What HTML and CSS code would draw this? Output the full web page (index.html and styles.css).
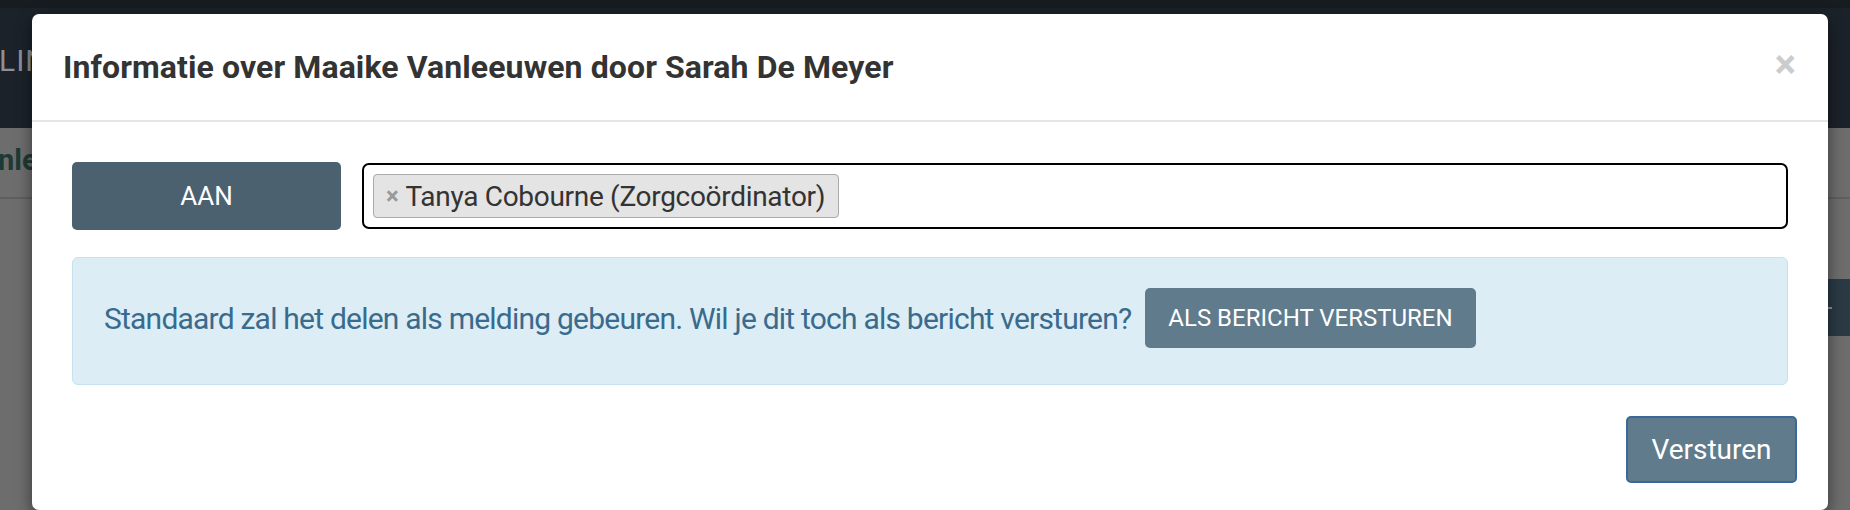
FILE: index.html
```html
<!DOCTYPE html>
<html lang="nl">
<head>
<meta charset="utf-8">
<title>Informatie delen</title>
<link rel="stylesheet" href="styles.css">
</head>
<body>
<div class="page">
  <header class="topbar">
    <div class="topstrip"></div>
    <div class="brandrow"><span class="brand">LINK</span></div>
  </header>
  <div class="subbar"><span class="pagetitle">nleeuwen</span></div>
  <div class="content">
    <div class="sidebtn"><span class="dot"></span></div>
  </div>
</div>

<div class="modal">
  <div class="modal-header">
    <h4 class="modal-title">Informatie over Maaike Vanleeuwen door Sarah De Meyer</h4>
    <span class="close">&#215;</span>
  </div>
  <div class="modal-body">
    <div class="to-row">
      <div class="to-label">AAN</div>
      <div class="to-input">
        <span class="tag"><span class="tag-x">&#215;</span>Tanya Cobourne (Zorgcoördinator)</span>
      </div>
    </div>
    <div class="alert">
      <span class="alert-text">Standaard zal het delen als melding gebeuren. Wil je dit toch als bericht versturen?</span>
      <button class="btn-small">ALS BERICHT VERSTUREN</button>
    </div>
  </div>
  <div class="modal-footer">
    <button class="btn-send">Versturen</button>
  </div>
</div>
</body>
</html>
```

FILE: styles.css
```css
html, body {
  margin: 0;
  padding: 0;
}
body {
  width: 1850px;
  height: 510px;
  overflow: hidden;
  background: #6d6d6d;
  font-family: "Roboto", "Liberation Sans", sans-serif;
}
.page {
  height: 510px;
  display: flex;
  flex-direction: column;
}
.topbar {
  height: 128px;
  background: #1b2229;
  display: flex;
  flex-direction: column;
}
.topstrip {
  height: 8px;
  background: #171c21;
}
.brandrow {
  flex: 1;
  display: flex;
  align-items: center;
  padding-bottom: 16px;
}
.brand {
  font-size: 30px;
  color: #8b9196;
  letter-spacing: 1px;
  margin-left: -1px;
}
.subbar {
  height: 69px;
  border-bottom: 2px solid #5f5f5f;
  display: flex;
  align-items: center;
}
.pagetitle {
  font-size: 29px;
  font-weight: 700;
  color: #1e3a34;
  margin-left: -2px;
  padding-bottom: 6px;
}
.content {
  display: flex;
  justify-content: flex-end;
}
.sidebtn {
  margin-top: 80px;
  width: 22px;
  height: 57px;
  background: #2b3a45;
  display: flex;
  align-items: center;
}
.dot {
  width: 4px;
  height: 2px;
  background: #8a949b;
}

.modal {
  position: absolute;
  left: 32px;
  top: 14px;
  width: 1796px;
  background: #fff;
  border-radius: 7px;
  box-shadow: 0 5px 15px rgba(0, 0, 0, 0.5);
}
.modal-header {
  height: 106px;
  border-bottom: 2px solid #e5e5e5;
  padding: 0 32px 0 31px;
  display: flex;
  align-items: center;
  justify-content: space-between;
}
.modal-title {
  margin: 0;
  font-size: 32px;
  font-weight: 700;
  color: #333;
  letter-spacing: 0.1px;
}
.close {
  font-size: 40px;
  font-weight: 700;
  color: #cccccc;
  line-height: 1;
  margin-top: -4px;
}
.modal-body {
  padding: 40px 40px 0;
}
.to-row {
  display: flex;
  gap: 21px;
  align-items: flex-start;
}
.to-label {
  width: 269px;
  height: 68px;
  background: #4b6170;
  color: #fff;
  font-size: 26px;
  border-radius: 5px;
  display: flex;
  align-items: center;
  justify-content: center;
}
.to-input {
  flex: 1;
  height: 62px;
  margin-top: 1px;
  border: 2px solid #000;
  border-radius: 7px;
  padding: 0 9px;
  display: flex;
  align-items: center;
}
.tag {
  height: 42px;
  border: 1px solid #aaa;
  background: #e4e4e4;
  border-radius: 4px;
  padding: 0 13px 0 12px;
  display: inline-flex;
  align-items: center;
  font-size: 28px;
  color: #333;
  letter-spacing: -0.3px;
}
.tag-x {
  font-size: 24px;
  font-weight: 700;
  color: #999;
  margin-right: 7px;
}
.alert {
  margin-top: 27px;
  border: 1px solid #c3e3ee;
  background: #dcedf5;
  border-radius: 6px;
  padding: 30px 30px 36px 31px;
  display: flex;
  align-items: center;
}
.alert-text {
  font-size: 30px;
  color: #3a6a8c;
  letter-spacing: -0.78px;
}
.btn-small {
  margin-left: 14px;
  height: 60px;
  padding: 0 23px;
  border: 0;
  border-radius: 5px;
  background: #607b8c;
  color: #fff;
  font-family: inherit;
  font-size: 24px;
}
.modal-footer {
  padding: 31px 31px 27px;
  display: flex;
  justify-content: flex-end;
}
.btn-send {
  width: 171px;
  height: 67px;
  border: 2px solid #3b6898;
  border-radius: 5px;
  background: #607b8c;
  color: #fff;
  font-family: inherit;
  font-size: 28px;
}
```
